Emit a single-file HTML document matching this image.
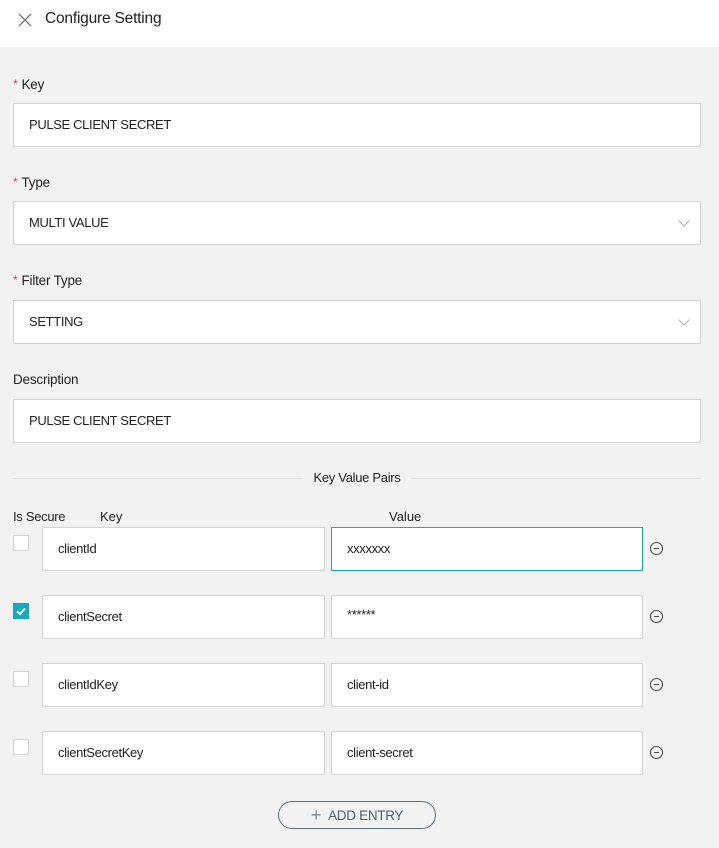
<!DOCTYPE html>
<html><head><style>
body{margin:0;width:719px;height:848px;background:#f2f2f2;font-family:"Liberation Sans",sans-serif;font-size:14px;color:#222;position:relative;overflow:hidden}
.a{position:absolute}
.hdr{left:0;top:0;width:719px;height:47px;background:#fff}
.lbl{font-size:13.5px;color:#222;letter-spacing:-0.2px}
.lbl b{color:#e0393e;font-weight:normal;font-size:12px;vertical-align:top;margin-right:4px}
.in{background:#fff;border:1px solid #d4d4d4;box-sizing:border-box;height:44px;line-height:42px;padding-left:15px;font-size:13px;letter-spacing:-0.35px;color:#222}
.chev{position:absolute;right:12px;top:15px;width:7px;height:7px;border-right:1px solid #aaa;border-bottom:1px solid #aaa;transform:rotate(45deg)}
.cb{width:16px;height:16px;background:#fff;border:1px solid #d4d4d4;box-sizing:border-box}
.min{width:13px;height:13px;border:1.3px solid #444;border-radius:50%;box-sizing:border-box}
.min:after{content:"";position:absolute;left:2.5px;top:4.5px;width:5px;height:1.3px;background:#444}
</style></head><body>
<div class="a hdr"></div>
<svg class="a" style="left:18px;top:13px" width="14" height="14"><path d="M1 1L13 13M13 1L1 13" stroke="#777" stroke-width="1.3"/></svg>
<div class="a" style="left:45px;top:10px;font-size:15.5px;letter-spacing:-0.2px;color:#222">Configure Setting</div>

<div class="a lbl" style="left:13px;top:77px"><b>*</b>Key</div>
<div class="a in" style="left:13px;top:103px;width:688px">PULSE CLIENT SECRET</div>
<div class="a lbl" style="left:13px;top:175px"><b>*</b>Type</div>
<div class="a in" style="left:13px;top:201px;width:688px">MULTI VALUE<span class="chev"></span></div>
<div class="a lbl" style="left:13px;top:273px"><b>*</b>Filter Type</div>
<div class="a in" style="left:13px;top:300px;width:688px">SETTING<span class="chev"></span></div>
<div class="a lbl" style="left:13px;top:372px">Description</div>
<div class="a in" style="left:13px;top:399px;width:688px">PULSE CLIENT SECRET</div>

<div class="a" style="left:13px;top:478px;width:688px;height:1px;background:#e2e2e2"></div>
<div class="a" style="left:303px;top:470px;width:108px;text-align:center;background:#f2f2f2;font-size:13px;letter-spacing:-0.3px">Key Value Pairs</div>

<div class="a" style="left:13px;top:509px;font-size:13px;letter-spacing:-0.3px">Is Secure</div>
<div class="a" style="left:100px;top:509px;font-size:13px">Key</div>
<div class="a" style="left:389px;top:509px;font-size:13px">Value</div>

<div class="a cb" style="left:13px;top:535px"></div>
<div class="a in" style="left:42px;top:527px;width:283px">clientId</div>
<div class="a in" style="left:331px;top:527px;width:312px;border-color:#17a9be">xxxxxxx</div>
<div class="a min" style="left:650px;top:542px"></div>

<div class="a cb" style="left:13px;top:603px;background:#17a9be;border-color:#17a9be"><svg width="14" height="14" style="position:absolute;left:0;top:0"><path d="M3 7.5L6 10L11 4.5" stroke="#fff" stroke-width="2" fill="none"/></svg></div>
<div class="a in" style="left:42px;top:595px;width:283px">clientSecret</div>
<div class="a in" style="left:331px;top:595px;width:312px;line-height:38px">******</div>
<div class="a min" style="left:650px;top:610px"></div>

<div class="a cb" style="left:13px;top:671px"></div>
<div class="a in" style="left:42px;top:663px;width:283px">clientIdKey</div>
<div class="a in" style="left:331px;top:663px;width:312px">client-id</div>
<div class="a min" style="left:650px;top:678px"></div>

<div class="a cb" style="left:13px;top:739px"></div>
<div class="a in" style="left:42px;top:731px;width:283px">clientSecretKey</div>
<div class="a in" style="left:331px;top:731px;width:312px">client-secret</div>
<div class="a min" style="left:650px;top:746px"></div>

<div class="a" style="left:278px;top:801px;width:158px;height:28px;box-sizing:border-box;border:1px solid #5a7080;border-radius:14px;color:#4a6272;font-size:13.5px;letter-spacing:-0.3px;line-height:26px;text-align:center"><span style="font-size:18px;vertical-align:-1px;margin-right:7px;color:#7a8a96">+</span>ADD ENTRY</div>
</body></html>
